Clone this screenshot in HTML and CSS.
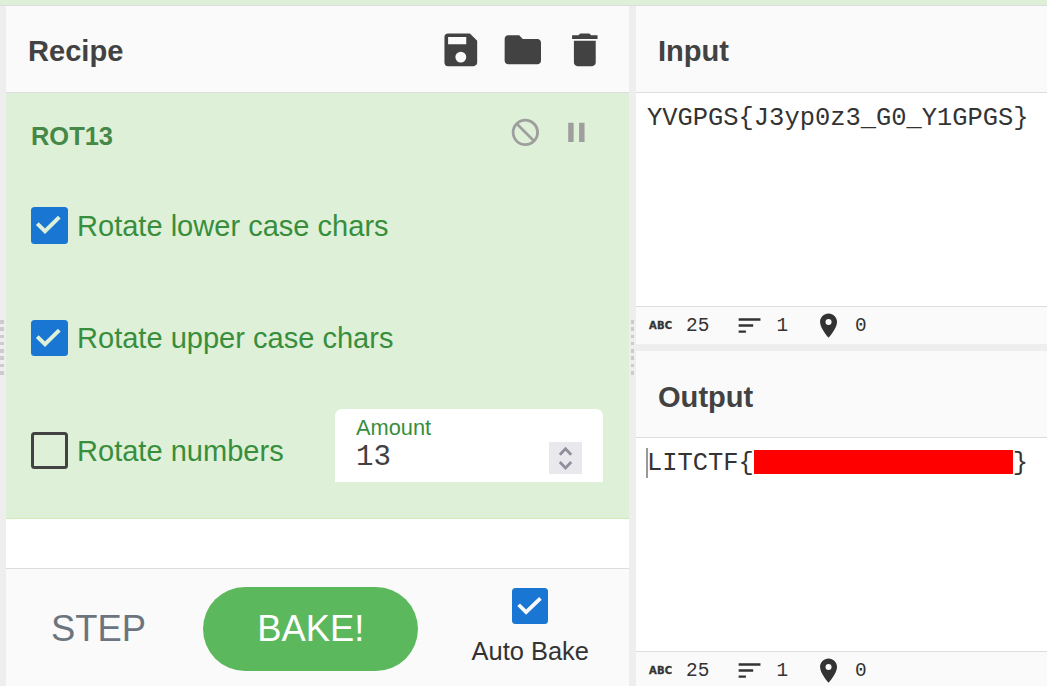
FILE: index.html
```html
<!DOCTYPE html>
<html lang="en">
<head>
<meta charset="utf-8">
<title>Recipe</title>
<link rel="stylesheet" href="styles.css">
</head>
<body>
<div class="banner"></div>
<main class="workspace">
  <div class="gutter gutter-left"><span class="grip"></span></div>
  <section class="recipe">
    <header class="title-bar">
      <h2>Recipe</h2>
      <div class="tools">
        <svg viewBox="0 0 24 24"><path d="M17 3H5a2 2 0 0 0-2 2v14a2 2 0 0 0 2 2h14c1.100 0 2-.9 2-2V7l-4-4zm-5 16a3 3 0 1 1 0-6 3 3 0 0 1 0 6zm3-10H5V5h10v4z"/></svg>
        <svg viewBox="0 0 24 24"><path d="M10 4H4c-1.100 0-1.990.9-1.990 2L2 18c0 1.100.9 2 2 2h16c1.100 0 2-.9 2-2V8c0-1.100-.9-2-2-2h-8l-2-2z"/></svg>
        <svg viewBox="0 0 24 24"><path d="M6 19c0 1.100.9 2 2 2h8c1.100 0 2-.9 2-2V7H6v12zM19 4h-3.500l-1-1h-5l-1 1H5v2h14V4z"/></svg>
      </div>
    </header>
    <div class="operation">
      <div class="op-head">
        <h3>ROT13</h3>
        <div class="op-tools">
          <svg viewBox="0 0 24 24"><path d="M12 2a10 10 0 1 0 0 20 10 10 0 0 0 0-20zm0 18a8 8 0 0 1-6.310-12.900L16.900 18.310A7.900 7.900 0 0 1 12 20zm6.310-3.100L7.100 5.690A8 8 0 0 1 18.310 16.900z"/></svg>
          <svg viewBox="0 0 24 24"><path d="M6 19h4V5H6v14zm8-14v14h4V5h-4z"/></svg>
        </div>
      </div>
      <div class="arg"><span class="check on"><svg viewBox="0 0 37 37"><path d="M6.300 16.600L14 24.200L28.300 10.200"/></svg></span><span class="label">Rotate lower case chars</span></div>
      <div class="arg arg-upper"><span class="check on"><svg viewBox="0 0 37 37"><path d="M6.300 16.600L14 24.200L28.300 10.200"/></svg></span><span class="label">Rotate upper case chars</span></div>
      <div class="arg">
        <span class="check"></span><span class="label">Rotate numbers</span>
        <div class="amount">
          <div class="amount-text"><label>Amount</label><span class="value">13</span></div>
          <span class="spinner"><svg viewBox="0 0 33 32"><path d="M10.800 12.800L16.500 6.800L22.200 12.800M10.800 20L16.500 26L22.200 20"/></svg></span>
        </div>
      </div>
    </div>
    <footer class="controls">
      <button class="step">STEP</button>
      <button class="bake">BAKE!</button>
      <div class="auto"><span class="check on light"><svg viewBox="0 0 37 37"><path d="M6.800 17.200L14.500 24.800L29.200 10.600"/></svg></span><span>Auto Bake</span></div>
    </footer>
  </section>
  <div class="gutter gutter-mid"><span class="grip"></span></div>
  <section class="io">
    <div class="pane">
      <header class="title-bar"><h2>Input</h2></header>
      <div class="editor">YVGPGS{J3yp0z3_G0_Y1GPGS}</div>
      <footer class="status">
        <span class="abc">ABC</span><span class="count length">25</span>
        <svg class="lines" viewBox="0 0 24 24"><path d="M3 18h6v-2H3v2zM3 6v2h18V6H3zm0 7h12v-2H3v2z"/></svg><span class="count">1</span>
        <svg class="pin" viewBox="0 0 24 24"><path d="M12 2C8.130 2 5 5.130 5 9c0 5.250 7 13 7 13s7-7.750 7-13c0-3.870-3.130-7-7-7zm0 9.500a2.500 2.500 0 1 1 0-5 2.500 2.500 0 0 1 0 5z"/></svg><span class="count">0</span>
      </footer>
    </div>
    <div class="pane pane-output">
      <header class="title-bar"><h2>Output</h2></header>
      <div class="editor"><span class="caret"></span>LITCTF{<span class="redacted"></span>}</div>
      <footer class="status">
        <span class="abc">ABC</span><span class="count length">25</span>
        <svg class="lines" viewBox="0 0 24 24"><path d="M3 18h6v-2H3v2zM3 6v2h18V6H3zm0 7h12v-2H3v2z"/></svg><span class="count">1</span>
        <svg class="pin" viewBox="0 0 24 24"><path d="M12 2C8.130 2 5 5.130 5 9c0 5.250 7 13 7 13s7-7.750 7-13c0-3.870-3.130-7-7-7zm0 9.500a2.500 2.500 0 1 1 0-5 2.500 2.500 0 0 1 0 5z"/></svg><span class="count">0</span>
      </footer>
    </div>
  </section>
</main>
</body>
</html>
```
FILE: styles.css
```css
* { box-sizing: border-box; }
body {
  margin: 0;
  height: 686px;
  overflow: hidden;
  font-family: "Liberation Sans", Arial, sans-serif;
  color: #333;
  background: #fff;
}
svg { display: block; fill: currentColor; flex: none; }
h2, h3 { margin: 0; }
.banner { height: 6px; background: #dff0d8; border-bottom: 1px solid #ddd; }
.workspace { display: grid; grid-template-columns: 6px 623px 7px 411px; height: 680px; }

.gutter { background: #eee; padding-top: 314px; }
.gutter-mid { padding-left: 2px; }
.grip {
  display: block;
  width: 4px;
  height: 55px;
  background: repeating-linear-gradient(#ccc 0 3.600px, #eee 3.600px 7.300px);
}
.gutter-mid .grip { width: 3px; }

.title-bar {
  height: 87px;
  padding: 3px 22px 0;
  display: flex;
  align-items: center;
  justify-content: space-between;
  background: #fafafa;
  border-bottom: 1px solid #ddd;
  color: #424242;
}
.title-bar h2 { font-size: 29.090px; line-height: 34px; }
.pane-output .title-bar { padding-top: 5px; }
.tools { display: flex; gap: 18.400px; margin-top: -2px; }
.tools svg { width: 43.640px; height: 43.640px; }

.recipe { display: flex; flex-direction: column; height: 680px; }
.operation {
  height: 426px;
  padding: 22px 26px 0 25px;
  background: #dff0d8;
  border-bottom: 1px solid #d0e9b8;
  color: #388e3c;
}
.op-head { display: flex; justify-content: space-between; height: 54px; }
.op-head h3 { font-size: 25.450px; line-height: 30px; padding-top: 6px; color: #468847; }
.op-tools { display: flex; gap: 18.500px; margin: 1px 10.500px 0 0; color: #9e9e9e; }
.op-tools svg { width: 32.730px; height: 32.730px; }
.arg { display: flex; align-items: center; height: 112.700px; font-size: 29.050px; }
.label { margin-left: 9px; line-height: 34px; padding-top: 1px; }
.arg-upper .label { padding-top: 0; margin-top: -1px; }
.check {
  width: 37px;
  height: 36.500px;
  flex: none;
  border: 3px solid #424242;
  border-radius: 3.500px;
}
.check.on { background: #1976d2; border: 0; }
.check svg { width: 37px; height: 37px; fill: none; stroke: #dff0d8; stroke-width: 3.900; }
.check.light svg { width: 36px; height: 36px; stroke: #fafafa; }
.amount {
  display: flex;
  justify-content: space-between;
  width: 268px;
  height: 73px;
  margin: -10px 0 0 auto;
  padding: 6px 21px 0;
  background: #fff;
  border-radius: 7px 7px 0 0;
}
.amount-text { display: flex; flex-direction: column; }
.amount label { font-size: 21.820px; line-height: 26px; }
.value { font-family: "Liberation Mono", monospace; font-size: 29.090px; line-height: 33px; color: #424242; }
.spinner { width: 33px; height: 32px; margin-top: 27px; background: #e9e9ed; }
.spinner svg { width: 33px; height: 32px; fill: none; stroke: #8f8f9d; stroke-width: 2.800; }

.controls {
  display: flex;
  height: 118px;
  margin-top: auto;
  padding: 18px 40px 0 45px;
  background: #fafafa;
  border-top: 1px solid #ddd;
  justify-content: space-between;
}
button { font: 36.360px/84px "Liberation Sans", Arial, sans-serif; border: 0; padding: 0; height: 84px; background: none; }
.step { color: #6c757d; }
.bake { width: 215px; margin-left: 4px; border-radius: 42px; background: #5cb85c; color: #fff; }
.auto { display: flex; flex-direction: column; align-items: center; padding-top: 1px; font-size: 25.450px; line-height: 30px; gap: 12px; }
.auto .check { width: 36px; height: 36px; }

.io { display: grid; grid-template-rows: 338px 338px; gap: 7px; background: #eee; height: 680px; overflow: hidden; }
.pane { display: flex; flex-direction: column; background: #fff; }
.editor {
  flex: 1;
  display: flex;
  align-items: flex-start;
  padding: 11px 11px 0;
  font: 25.450px/30px "Liberation Mono", monospace;
}
.caret { width: 2px; height: 30px; margin: -1px -1px 0; background: #999; }
.redacted { width: 259px; height: 24px; margin-top: 1px; background: #f00; }
.status {
  display: flex;
  align-items: center;
  height: 38px;
  padding-left: 13px;
  border-top: 1px solid #ddd;
  background: #fafafa;
  font: 19.400px/22px "Liberation Mono", monospace;
}
.status svg { width: 29.100px; height: 29.100px; }
.abc { width: 25px; font: bold 10px/12px "DejaVu Sans", sans-serif; letter-spacing: 0.200px; -webkit-text-stroke: 0.300px; }
.length { margin-left: 12px; }
.lines { margin: 0 12px 0 26px; }
.pin { margin: 0 12px 0 26px; }
```
